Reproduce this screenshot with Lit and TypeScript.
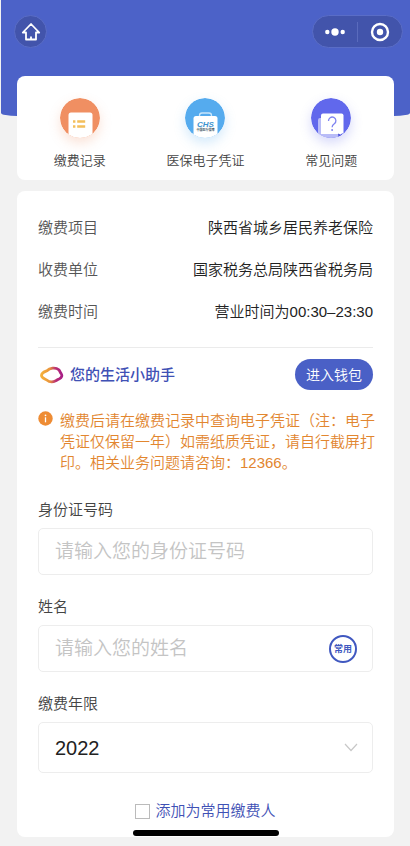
import { LitElement, html, css, svg } from "lit";
import { customElement, state } from "lit/decorators.js";

interface Shortcut {
  label: string;
  icon: unknown;
  tone: string;
}

const recordIcon = svg`
  <clipPath id="record-clip"><circle cx="20" cy="20" r="20"/></clipPath>
  <circle cx="20" cy="20" r="20" fill="#f08f62"/>
  <rect x="8.5" y="14.5" width="24" height="30" rx="2.5" fill="#fff" clip-path="url(#record-clip)"/>
  <path d="M13 23.5h2.4M17.2 23.5h8M13 28.5h2.4M17.2 28.5h8" stroke="#f3bf5b" stroke-width="2.4"/>`;

const cardIcon = svg`
  <clipPath id="card-clip"><circle cx="20" cy="20" r="20"/></clipPath>
  <circle cx="20" cy="20" r="20" fill="#55abee"/>
  <path d="M14.5 19v-1.500a2.500 2.500 0 0 1 2.500-2.500h7a2.500 2.500 0 0 1 2.500 2.500V19" fill="none" stroke="#c9e6fb" stroke-width="1.300"/>
  <rect x="8.500" y="18" width="24" height="28" rx="2.500" fill="#fff" clip-path="url(#card-clip)"/>
  <text x="20.500" y="29" class="chs">CHS</text>
  <text x="20.500" y="33" class="chs-sub">中国医疗保障</text>`;

const helpIcon = svg`
  <clipPath id="help-clip"><circle cx="20" cy="20" r="20"/></clipPath>
  <circle cx="20" cy="20" r="20" fill="#6168ec"/>
  <path d="M7 22a2 2 0 0 1 2-2h3v15.500h18v5H7z" fill="#b9bcf7" clip-path="url(#help-clip)"/>
  <path d="M12 15.500h18.500a2 2 0 0 1 2 2V35l-2.500 1H10V17.500a2 2 0 0 1 2-2z" fill="#fff"/>
  <path d="M27 35.500l3.500 1.800-3 2z" fill="#4b52d8"/>
  <path d="M17.500 23a3.700 3.700 0 1 1 5.800 2.800c-1.500 1-2.200 1.700-2.200 3.500" fill="none" stroke="#7f84f0" stroke-width="1.300"/>
  <circle cx="21.100" cy="32" r="1" fill="#7f84f0"/>`;

@customElement("app-root")
export class AppRoot extends LitElement {
  @state() private year = "2022";

  private shortcuts: Shortcut[] = [
    { label: "缴费记录", icon: recordIcon, tone: "orange" },
    { label: "医保电子凭证", icon: cardIcon, tone: "blue" },
    { label: "常见问题", icon: helpIcon, tone: "violet" },
  ];

  private details = [
    ["缴费项目", "陕西省城乡居民养老保险"],
    ["收费单位", "国家税务总局陕西省税务局"],
    ["缴费时间", "营业时间为00:30–23:30"],
  ];

  static styles = css`
    :host {
      display: block;
      min-height: 100vh;
      box-sizing: border-box;
      background: #f2f2f2;
      color: #222;
      font-family: "Liberation Sans", "Noto Sans CJK SC", sans-serif;
      font-size: 15px;
      line-height: 20px;
      font-weight: 350;
      padding-bottom: 9px;
    }
    * {
      box-sizing: border-box;
    }
    button, input, select {
      font: inherit;
      color: inherit;
      margin: 0;
    }
    button {
      border: 0;
      padding: 0;
      background: none;
      cursor: pointer;
    }
    svg {
      display: block;
    }
    .header {
      height: 116px;
      margin-left: 1px;
      padding: 15px 7px 0 13px;
      display: flex;
      align-items: flex-start;
      justify-content: space-between;
      background: #4c62c8;
      border-radius: 0 0 16px 16px / 0 0 3px 3px;
    }
    .home, .capsule {
      height: 33px;
      border: 1px solid #5a6dc6;
      border-radius: 17px;
      background: #4254ab;
      display: flex;
      align-items: center;
    }
    .home {
      width: 33px;
      justify-content: center;
    }
    .capsule {
      width: 91px;
    }
    .capsule button {
      flex: 1;
      height: 20px;
      display: flex;
      align-items: center;
      justify-content: center;
    }
    .capsule button + button {
      border-left: 1px solid #5a6bbd;
    }
    main {
      margin: -40px 16px 0 17px;
      display: grid;
      gap: 11px;
    }
    .card {
      background: #fff;
      border-radius: 8px;
    }
    .shortcuts {
      height: 104px;
      padding-top: 22px;
      display: grid;
      grid-template-columns: repeat(3, 1fr);
    }
    .shortcut {
      display: flex;
      flex-direction: column;
      align-items: center;
      gap: 13px;
      font-size: 13px;
      line-height: 20px;
      color: #444;
      height: 73px;
    }
    .disc {
      border-radius: 50%;
    }
    .orange {
      box-shadow: 0 5px 12px rgba(240, 143, 98, 0.25);
    }
    .blue {
      box-shadow: 0 5px 12px rgba(85, 171, 238, 0.25);
    }
    .violet {
      box-shadow: 0 5px 12px rgba(97, 104, 236, 0.25);
    }
    .chs {
      font: italic 700 8px "Liberation Sans", sans-serif;
      fill: #3c93cf;
      text-anchor: middle;
    }
    .chs-sub {
      font: 700 3px "Noto Sans CJK SC", sans-serif;
      fill: #456;
      text-anchor: middle;
    }
    .panel {
      padding: 16px 21px;
    }
    .details {
      margin: 0 0 14px;
    }
    .row {
      display: flex;
      justify-content: space-between;
      align-items: center;
      height: 42px;
    }
    dt {
      color: #555;
    }
    dd {
      margin: 0;
    }
    .assistant {
      display: flex;
      align-items: center;
      height: 54px;
      border-top: 1px solid #ebebeb;
    }
    .assistant h2 {
      flex: 1;
      margin: 0 0 0 5px;
      font-size: 15px;
      font-weight: 500;
      color: #3f51b5;
    }
    .wallet {
      width: 78px;
      height: 31px;
      border-radius: 16px;
      background: #4a60c6;
      color: #fff;
      font-size: 14px;
    }
    .notice {
      display: flex;
      gap: 7px;
      margin: 9px -2px 27px 0;
      color: #e2862f;
      line-height: 21px;
    }
    .notice svg {
      flex: none;
      margin-top: 1px;
    }
    .notice p {
      margin: 0;
    }
    .field {
      display: grid;
      gap: 8px;
      margin-bottom: 22px;
      color: #444;
    }
    .box {
      display: flex;
      align-items: center;
      height: 47px;
      border: 1px solid #ededed;
      border-radius: 5px;
      padding-right: 15px;
    }
    .box:focus-within {
      border-color: #4c62c8;
    }
    .tall {
      height: 51px;
      padding-right: 14px;
    }
    .box input, .box select {
      flex: 1;
      min-width: 0;
      height: 100%;
      border: 0;
      outline: 0;
      padding: 0 0 0 16px;
      background: none;
      font-size: 19px;
      color: #222;
      appearance: none;
    }
    .box select {
      font-size: 20px;
    }
    .box input::placeholder {
      color: #c4c4c4;
      opacity: 1;
    }
    .frequent {
      width: 28px;
      height: 28px;
      border: 2px solid #4058c0;
      border-radius: 50%;
      font-size: 9px;
      line-height: 12px;
      font-weight: 700;
      color: #4058c0;
    }
    .save {
      display: flex;
      align-items: center;
      justify-content: center;
      gap: 5px;
      margin: 28px 0 0;
      color: #3f51b5;
    }
    .save input {
      appearance: none;
      width: 15px;
      height: 15px;
      border: 1px solid #bbb;
      background: #fff;
    }
    .save input:checked {
      background: #4c62c8;
    }
    .home-bar {
      position: fixed;
      left: 50%;
      bottom: 10px;
      width: 146px;
      height: 6px;
      margin-left: -72px;
      border-radius: 3px;
      background: #000;
    }
  `;

  render() {
    return html`
      <header class="header">
        <button class="home" aria-label="首页">
          <svg width="20" height="20" viewBox="0 0 20 20" fill="none" stroke="#fff" stroke-width="1.800">
            <path d="M1.800 10.500L10 2l8.200 8.500h-3.200v7H5v-7z" stroke-linejoin="round"/>
            <path d="M10 14.500v3"/>
          </svg>
        </button>
        <div class="capsule">
          <button aria-label="更多">
            <svg width="20" height="8" viewBox="0 0 20 8" fill="#fff">
              <circle cx="2.300" cy="4" r="2.200"/><circle cx="10" cy="4" r="3.700"/><circle cx="17.700" cy="4" r="2.200"/>
            </svg>
          </button>
          <button aria-label="关闭">
            <svg width="20" height="20" viewBox="0 0 20 20">
              <circle cx="10" cy="10" r="8" fill="none" stroke="#fff" stroke-width="2.400"/>
              <circle cx="10" cy="10" r="3.200" fill="#fff"/>
            </svg>
          </button>
        </div>
      </header>
      <main>
        <nav class="card shortcuts">
          ${this.shortcuts.map(
            (s) => html`<button class="shortcut">
              <svg class="disc ${s.tone}" width="40" height="40" viewBox="0 0 40 40">${s.icon}</svg>
              <span>${s.label}</span>
            </button>`
          )}
        </nav>
        <form class="card panel" @submit=${(e: Event) => e.preventDefault()}>
          <dl class="details">
            ${this.details.map(([k, v]) => html`<div class="row"><dt>${k}</dt><dd>${v}</dd></div>`)}
          </dl>
          <div class="assistant">
            <svg width="27" height="18" viewBox="0 0 27 18" fill="none">
              <defs>
                <linearGradient id="ring" x1="0" y1="0" x2="1" y2="0">
                  <stop offset="0" stop-color="#f5b03b"/>
                  <stop offset="0.400" stop-color="#e9953c"/>
                  <stop offset="0.700" stop-color="#b92f72"/>
                  <stop offset="1" stop-color="#a81f86"/>
                </linearGradient>
              </defs>
              <path d="M3.500 9.500C3.500 6.500 6.500 5.800 9 4.800 11.500 2 17.500 1 20.800 3.800c1.200 1.200 1.300 2.600 2.300 3.700 1.500 2 .5 4.300-1.600 5.200-1.500.6-2.500 1.400-3.800 2.100-3 1.500-6.400 1.300-9-.8C7 12.700 3.500 12.300 3.500 9.500z" stroke="url(#ring)" stroke-width="2.800"/>
            </svg>
            <h2>您的生活小助手</h2>
            <button type="button" class="wallet">进入钱包</button>
          </div>
          <div class="notice">
            <svg width="15" height="15" viewBox="0 0 15 15">
              <circle cx="7.500" cy="7.500" r="7.200" fill="#ee8c34"/>
              <circle cx="7.500" cy="4.300" r="0.900" fill="#fff"/>
              <path d="M7.500 6.300v5" stroke="#fff" stroke-width="1.300"/>
            </svg>
            <p>缴费后请在缴费记录中查询电子凭证（注：电子凭证仅保留一年）如需纸质凭证，请自行截屏打印。相关业务问题请咨询：12366。</p>
          </div>
          <div class="field">
            <label for="id-number">身份证号码</label>
            <div class="box"><input id="id-number" type="text" placeholder="请输入您的身份证号码" /></div>
          </div>
          <div class="field">
            <label for="name">姓名</label>
            <div class="box">
              <input id="name" type="text" placeholder="请输入您的姓名" />
              <button type="button" class="frequent">常用</button>
            </div>
          </div>
          <div class="field">
            <label for="year">缴费年限</label>
            <div class="box tall">
              <select id="year" .value=${this.year} @change=${(e: Event) => (this.year = (e.target as HTMLSelectElement).value)}>
                <option value="2022">2022</option>
              </select>
              <svg width="14" height="9" viewBox="0 0 14 9" fill="none" stroke="#c8c8c8" stroke-width="1.200">
                <path d="M1 1l6 6.500L13 1"/>
              </svg>
            </div>
          </div>
          <label class="save"><input type="checkbox" />添加为常用缴费人</label>
        </form>
      </main>
      <div class="home-bar"></div>
    `;
  }
}
